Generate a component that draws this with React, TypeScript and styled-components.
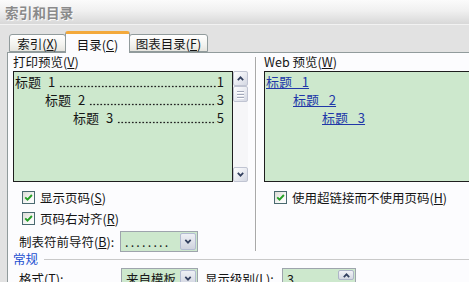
import styled, { createGlobalStyle } from "styled-components"

const GlobalStyle = createGlobalStyle`
  * { box-sizing: border-box; }
  html, body { margin: 0; padding: 0; background: #e2e2e2; }
  body {
    font-family: "Noto Sans CJK SC", "Liberation Sans", sans-serif;
    font-size: 13px;
    color: #151515;
  }
`

const Dialog = styled.div`
  width: 469px;
  height: 282px;
  overflow: hidden;
  background: #e2e2e2;
  display: flex;
  flex-direction: column;
`

const TitleBar = styled.div`
  flex: none;
  height: 25px;
  padding-left: 5px;
  display: flex;
  align-items: center;
  border-bottom: 1px solid #f2f2f2;
  background: linear-gradient(#fbfbfb, #f0f0f0 45%, #d8d8d8);
`

const Title = styled.span`
  font-size: 13.5px;
  font-weight: 700;
  letter-spacing: 0.2px;
  color: #8a8a8a;
  text-shadow: 1px 1px 0 #fafafa;
`

const TabStrip = styled.div`
  flex: none;
  height: 27px;
  padding-left: 9px;
  display: flex;
  align-items: flex-end;
`

const Tab = styled.div<{ $active?: boolean; $w: number }>`
  position: relative;
  width: ${(p) => p.$w}px;
  height: ${(p) => (p.$active ? 22 : 18)}px;
  margin-bottom: ${(p) => (p.$active ? -1 : 0)}px;
  z-index: ${(p) => (p.$active ? 2 : 1)};
  display: flex;
  align-items: center;
  justify-content: center;
  font-size: 12.5px;
  line-height: 15px;
  padding-top: 1px;
  border: 1px solid #919b9c;
  border-bottom: ${(p) => (p.$active ? "none" : "1px solid #919b9c")};
  border-top: ${(p) => (p.$active ? "3px solid #f3a93c" : "1px solid #919b9c")};
  border-radius: 3px 3px 0 0;
  background: ${(p) => (p.$active ? "#fcfcfe" : "linear-gradient(#ffffff, #f3f3ef 60%, #e6e5df)")};
  margin-left: ${(p) => (p.$active ? -1 : 0)}px;
  margin-right: ${(p) => (p.$active ? -1 : 0)}px;
`

const Panel = styled.div`
  flex: 1;
  margin-left: 7px;
  border-top: 1px solid #919b9c;
  border-left: 1px solid #919b9c;
  background: #fcfcfe;
  padding-left: 5px;
  display: flex;
  flex-direction: column;
`

const Top = styled.div`
  flex: none;
  height: 199px;
  display: flex;
`

const Column = styled.div<{ $w: number }>`
  flex: none;
  width: ${(p) => p.$w}px;
  display: flex;
  flex-direction: column;
`

const Divider = styled.div`
  flex: none;
  width: 2px;
  margin: 4px 7px 1px 7px;
  border-left: 1px solid #a9a9a9;
  border-right: 1px solid #ffffff;
`

const FieldLabel = styled.div`
  height: 18px;
  line-height: 18px;
  font-size: 12.5px;
`

const PreviewRow = styled.div`
  display: flex;
  height: 111px;
`

const PreviewBox = styled.div<{ $w: number }>`
  flex: none;
  width: ${(p) => p.$w}px;
  height: 111px;
  border: 1px solid #1e1e1e;
  background: #cde8cd;
  padding: 1px 8px 0 1px;
  overflow: hidden;
`

const TocRow = styled.div<{ $indent: number }>`
  display: flex;
  height: 18px;
  line-height: 18px;
  padding-left: ${(p) => p.$indent}px;
  white-space: nowrap;
  word-spacing: 4px;
`

const Leader = styled.span`
  flex: 1;
  height: 18px;
  margin: 0 1px 0 4px;
  background: radial-gradient(circle, #222 0 0.75px, transparent 1.15px) 0 12px / 3.5px 3px repeat-x;
`

const TocLink = styled.a<{ $indent: number }>`
  display: block;
  width: fit-content;
  height: 18px;
  line-height: 18px;
  margin-left: ${(p) => p.$indent}px;
  color: #2137a8;
  text-decoration: underline;
  white-space: pre;
  word-spacing: 2px;
`

const ScrollBar = styled.div`
  flex: none;
  width: 15px;
  height: 111px;
  background: #f6f6f8;
  display: flex;
  flex-direction: column;
  justify-content: space-between;
`

const ScrollTop = styled.div`
  display: flex;
  flex-direction: column;
`

const ScrollButton = styled.div<{ $h: number }>`
  width: 15px;
  height: ${(p) => p.$h}px;
  display: flex;
  flex-direction: column;
  align-items: center;
  justify-content: center;
  gap: 2px;
  border: 1px solid #c0c4d2;
  border-radius: 2px;
  background: linear-gradient(135deg, #ffffff, #e6e8ef 60%, #d3d7e2);
`

const Grip = styled.span`
  width: 7px;
  height: 1px;
  background: #a3a9ba;
  box-shadow: 0 1px 0 #ffffff;
`

const CheckRow = styled.label<{ $pad: number }>`
  display: flex;
  align-items: center;
  height: 21px;
  padding-left: ${(p) => p.$pad}px;
  gap: 5px;
  font-size: 12.5px;
`

const CheckBox = styled.span`
  flex: none;
  width: 13px;
  height: 13px;
  border: 1px solid #4a6a70;
  background: linear-gradient(135deg, #dcdcd6, #fafafa 70%);
  display: flex;
  align-items: center;
  justify-content: center;
`

const CheckList = styled.div`
  padding-top: 5px;
  display: flex;
  flex-direction: column;
`

const FormRow = styled.div<{ $mt: number }>`
  display: flex;
  align-items: center;
  height: 21px;
  margin-top: ${(p) => p.$mt}px;
  padding-left: 6px;
  font-size: 12.5px;
  white-space: nowrap;
`

const RowLabel = styled.span<{ $w: number; $pl?: number }>`
  flex: none;
  width: ${(p) => p.$w}px;
  padding-left: ${(p) => p.$pl ?? 0}px;
`

const Combo = styled.div<{ $w: number }>`
  flex: none;
  width: ${(p) => p.$w}px;
  height: 21px;
  border: 1px solid #9ea4ad;
  background: #cde8cd;
  display: flex;
  align-items: center;
  padding: 1px;
`

const ComboText = styled.span<{ $dots?: boolean }>`
  flex: 1;
  padding-left: 3px;
  letter-spacing: ${(p) => (p.$dots ? "2.2px" : "0")};
  color: #1a1a1a;
  overflow: hidden;
`

const ComboButton = styled.span`
  flex: none;
  width: 16px;
  height: 17px;
  border: 1px solid #b3bbd1;
  border-radius: 2px;
  background: linear-gradient(#eef0f5, #cfd3de);
  display: flex;
  align-items: center;
  justify-content: center;
`

const SpinBox = styled.div`
  flex: none;
  width: 74px;
  height: 21px;
  border: 1px solid #9ea4ad;
  background: #cde8cd;
  display: flex;
  padding: 1px;
`

const SpinText = styled.span`
  flex: 1;
  padding-left: 3px;
  line-height: 17px;
`

const SpinButton = styled.span`
  flex: none;
  width: 16px;
  height: 10px;
  border: 1px solid #aeb5c8;
  border-radius: 2px;
  background: linear-gradient(#f2f3f7, #d4d8e2);
  display: flex;
  align-items: center;
  justify-content: center;
`

const GroupHeader = styled.div`
  height: 14px;
  display: flex;
  align-items: center;
  line-height: 14px;
  color: #1b4fd0;
  font-size: 12.5px;
`

const GroupLine = styled.span`
  flex: 1;
  height: 1px;
  margin: 1px 0 0 6px;
  background: #c9c9c9;
`

const Chevron = ({ up, w = 7 }: { up?: boolean; w?: number }) => (
	<svg width={w} height={5} viewBox="0 0 7 5">
		<path
			d={up ? "M0.8 4.2 L3.5 1.3 L6.2 4.2" : "M0.8 0.8 L3.5 3.7 L6.2 0.8"}
			fill="none"
			stroke="#33405f"
			strokeWidth={1.7}
		/>
	</svg>
)

const Check = ({ label, pad }: { label: React.ReactNode; pad: number }) => (
	<CheckRow $pad={pad}>
		<CheckBox>
			<svg width={9} height={9} viewBox="0 0 9 9">
				<path d="M1.2 4.3 L3.5 6.6 L7.9 2" fill="none" stroke="#25a025" strokeWidth={1.9} />
			</svg>
		</CheckBox>
		<span>{label}</span>
	</CheckRow>
)

const tocRows = [
	{ text: "标题 1", page: "1", indent: 0 },
	{ text: "标题 2", page: "3", indent: 30 },
	{ text: "标题 3", page: "5", indent: 58 },
]

const linkRows = [
	{ text: "标题  1", indent: 0 },
	{ text: "标题  2", indent: 27 },
	{ text: "标题  3", indent: 56 },
]

export default function App() {
	return (
		<>
			<GlobalStyle />
			<Dialog>
				<TitleBar>
					<Title>索引和目录</Title>
				</TitleBar>
				<TabStrip>
					<Tab $w={57}>
						索引(<u>X</u>)
					</Tab>
					<Tab $active $w={65}>
						目录(<u>C</u>)
					</Tab>
					<Tab $w={79}>
						图表目录(<u>F</u>)
					</Tab>
				</TabStrip>
				<Panel>
					<Top>
						<Column $w={235}>
							<FieldLabel>
								打印预览(<u>V</u>)
							</FieldLabel>
							<PreviewRow>
								<PreviewBox $w={220}>
									{tocRows.map((r) => (
										<TocRow $indent={r.indent} key={r.text}>
											<span>{r.text}</span>
											<Leader />
											<span>{r.page}</span>
										</TocRow>
									))}
								</PreviewBox>
								<ScrollBar>
									<ScrollTop>
										<ScrollButton $h={15}>
											<Chevron up />
										</ScrollButton>
										<ScrollButton $h={16}>
											<Grip />
											<Grip />
											<Grip />
										</ScrollButton>
									</ScrollTop>
									<ScrollButton $h={15}>
										<Chevron />
									</ScrollButton>
								</ScrollBar>
							</PreviewRow>
							<CheckList>
								<Check label={<>显示页码(<u>S</u>)</>} pad={9} />
								<Check label={<>页码右对齐(<u>R</u>)</>} pad={9} />
							</CheckList>
							<FormRow $mt={2}>
								<RowLabel $w={101}>
									制表符前导符(<u>B</u>):
								</RowLabel>
								<Combo $w={78}>
									<ComboText $dots>........</ComboText>
									<ComboButton>
										<Chevron w={8} />
									</ComboButton>
								</Combo>
							</FormRow>
						</Column>
						<Divider />
						<Column $w={230}>
							<FieldLabel>
								Web 预览(<u>W</u>)
							</FieldLabel>
							<PreviewBox $w={230}>
								{linkRows.map((r) => (
									<TocLink $indent={r.indent} key={r.text}>
										{r.text}
									</TocLink>
								))}
							</PreviewBox>
							<CheckList>
								<Check label={<>使用超链接而不使用页码(<u>H</u>)</>} pad={10} />
							</CheckList>
						</Column>
					</Top>
					<GroupHeader>
						常规
						<GroupLine />
					</GroupHeader>
					<FormRow $mt={2}>
						<RowLabel $w={102}>
							格式(<u>T</u>):
						</RowLabel>
						<Combo $w={77}>
							<ComboText>来自模板</ComboText>
							<ComboButton>
								<Chevron w={8} />
							</ComboButton>
						</Combo>
						<RowLabel $w={84} $pl={7}>
							显示级别(<u>L</u>):
						</RowLabel>
						<SpinBox>
							<SpinText>3</SpinText>
							<SpinButton>
								<Chevron up />
							</SpinButton>
						</SpinBox>
					</FormRow>
				</Panel>
			</Dialog>
		</>
	)
}
